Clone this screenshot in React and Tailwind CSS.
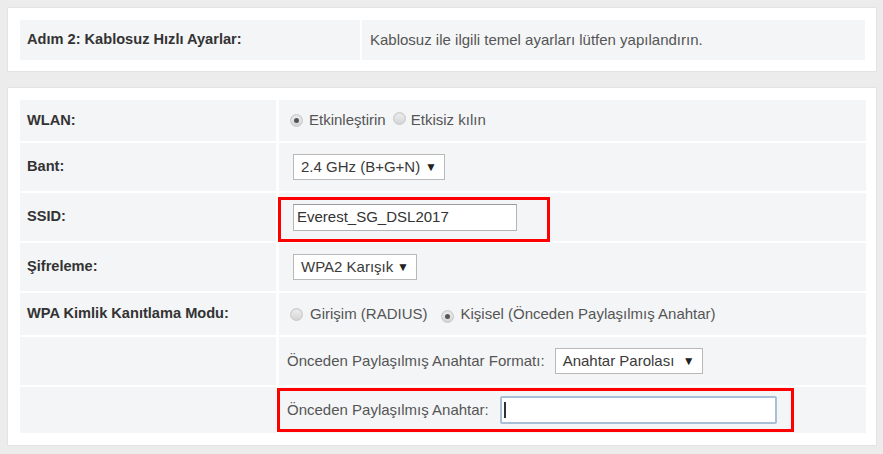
import React from 'react';

const font = { fontFamily: '"Liberation Sans", Arial, sans-serif' };

const Radio = ({ checked }) => (
    <span className="relative inline-flex h-[13px] w-[13px] shrink-0 items-center justify-center rounded-full border border-[#c8c8c8] bg-gradient-to-b from-[#f0f0f0] to-[#d4d4d4] shadow-[inset_0_1px_1px_rgba(0,0,0,0.08)]">
        {checked && <span className="h-[5px] w-[5px] rounded-full bg-[#555]" />}
    </span>
);

const Select = ({ value, width }) => (
    <div className={`flex h-[26px] items-center justify-between border border-[#b9b9b9] bg-white pl-[7px] pr-[7px] text-[15px] text-[#3a3a3a] ${width}`}>
        <span>{value}</span>
        <span className="text-[12px] text-[#222]">▼</span>
    </div>
);

const Label = ({ children }) => (
    <div className="flex items-center bg-[#f4f5f7] pl-[7px] text-[14.6px] font-bold text-[#333]">{children}</div>
);

const Value = ({ children, className = '' }) => (
    <div className={`relative flex items-center bg-[#f4f5f7] text-[15px] text-[#555] ${className}`}>{children}</div>
);

export default function App() {
    return (
        <div className="flex h-[454px] w-[883px] flex-col gap-[15px] bg-[#ececec] p-[7px]" style={font}>
            {/* step header */}
            <div className="w-[870px] border border-[#e3e3e3] bg-white pt-[12px] pb-[11px] pl-[12px] pr-[11px]">
                <div className="grid h-[40px] grid-cols-[340px_1fr] gap-x-[2px]">
                    <Label>Adım 2: Kablosuz Hızlı Ayarlar:</Label>
                    <Value className="pl-[8px] text-[#444]">Kablosuz ile ilgili temel ayarları lütfen yapılandırın.</Value>
                </div>
            </div>

            {/* wireless settings */}
            <div className="w-[870px] border border-[#e3e3e3] bg-white pt-[12px] pb-[12px] pl-[12px] pr-[10px]">
                <div className="grid grid-cols-[256px_1fr] grid-rows-[41px_48px_48px_48px_42px_48px_46px] gap-x-[3px] gap-y-[2px]">
                    <Label>WLAN:</Label>
                    <Value className="pl-[11px]">
                        <Radio checked />
                        <span className="ml-[6px]">Etkinleştirin</span>
                        <span className="ml-[7px]"><Radio /></span>
                        <span className="ml-[5px]">Etkisiz kılın</span>
                    </Value>

                    <Label>Bant:</Label>
                    <Value className="pl-[14px]">
                        <Select value="2.4 GHz (B+G+N)" width="w-[152px]" />
                    </Value>

                    <Label>SSID:</Label>
                    <Value className="pl-[14px]">
                        <div className="flex h-[27px] w-[224px] items-center border border-[#b5b5b5] border-t-[#9a9a9a] bg-white pl-[3px] text-[15px] text-[#333]">
                            Everest_SG_DSL2017
                        </div>
                        <div className="absolute left-[-1px] top-[4px] h-[45px] w-[272px] border-[3px] border-[#f00]" />
                    </Value>

                    <Label>Şifreleme:</Label>
                    <Value className="pl-[14px]">
                        <Select value="WPA2 Karışık" width="w-[124px]" />
                    </Value>

                    <Label>WPA Kimlik Kanıtlama Modu:</Label>
                    <Value className="pl-[11px]">
                        <Radio />
                        <span className="ml-[7px]">Girişim (RADIUS)</span>
                        <span className="ml-[13px]"><Radio checked /></span>
                        <span className="ml-[7px]">Kişisel (Önceden Paylaşılmış Anahtar)</span>
                    </Value>

                    <div className="bg-[#f4f5f7]" />
                    <Value className="pl-[8px]">
                        <span>Önceden Paylaşılmış Anahtar Formatı:</span>
                        <div className="ml-[10px]">
                            <Select value="Anahtar Parolası" width="w-[148px]" />
                        </div>
                    </Value>

                    <div className="bg-[#f4f5f7]" />
                    <Value className="pl-[8px]">
                        <span>Önceden Paylaşılmış Anahtar:</span>
                        <div className="ml-[11px] flex h-[28px] w-[277px] items-center rounded-[2px] border-2 border-[#a9bfd8] bg-white pl-[2px]">
                            <span className="h-[16px] w-[2px] bg-[#333]" />
                        </div>
                        <div className="absolute left-[-2px] top-[1px] h-[44px] w-[517px] border-[3px] border-[#f00]" />
                    </Value>
                </div>
            </div>
        </div>
    );
}
